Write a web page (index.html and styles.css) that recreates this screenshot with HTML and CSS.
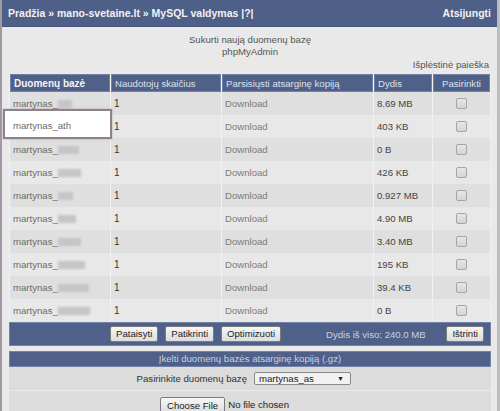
FILE: index.html
```html
<!DOCTYPE html>
<html lang="lt">
<head>
<meta charset="utf-8">
<title>MySQL valdymas</title>
<link rel="stylesheet" href="styles.css">
</head>
<body>
<div class="frame">
  <div class="topbar">
    <div class="crumbs">Pradžia » mano-svetaine.lt » MySQL valdymas |?|</div>
    <div class="logout">Atsijungti</div>
  </div>
  <div class="content">
    <div class="title">
      <div>Sukurti naują duomenų bazę</div>
      <div>phpMyAdmin</div>
    </div>
    <div class="search">Išplėstinė paieška</div>
    <table class="dbtable">
      <colgroup>
        <col class="c1"><col class="c2"><col class="c3"><col class="c4"><col class="c5">
      </colgroup>
      <thead>
        <tr>
          <th class="strong">Duomenų bazė</th>
          <th>Naudotojų skaičius</th>
          <th>Parsisiųsti atsarginę kopiją</th>
          <th>Dydis</th>
          <th class="center">Pasirinkti</th>
        </tr>
      </thead>
      <tbody>
        <tr><td class="name">martynas_<span class="blur" style="width:14px"></span></td><td class="num">1</td><td class="dl">Download</td><td class="size">8.69 MB</td><td class="center"><input type="checkbox" class="chk"></td></tr>
        <tr><td class="name hl"><span class="hlbox"></span><span class="hltext">martynas_ath</span></td><td class="num">1</td><td class="dl">Download</td><td class="size">403 KB</td><td class="center"><input type="checkbox" class="chk"></td></tr>
        <tr><td class="name">martynas_<span class="blur" style="width:21px"></span></td><td class="num">1</td><td class="dl">Download</td><td class="size">0 B</td><td class="center"><input type="checkbox" class="chk"></td></tr>
        <tr><td class="name">martynas_<span class="blur" style="width:23px"></span></td><td class="num">1</td><td class="dl">Download</td><td class="size">426 KB</td><td class="center"><input type="checkbox" class="chk"></td></tr>
        <tr><td class="name">martynas_<span class="blur" style="width:15px"></span></td><td class="num">1</td><td class="dl">Download</td><td class="size">0.927 MB</td><td class="center"><input type="checkbox" class="chk"></td></tr>
        <tr><td class="name">martynas_<span class="blur" style="width:18px"></span></td><td class="num">1</td><td class="dl">Download</td><td class="size">4.90 MB</td><td class="center"><input type="checkbox" class="chk"></td></tr>
        <tr><td class="name">martynas_<span class="blur" style="width:23px"></span></td><td class="num">1</td><td class="dl">Download</td><td class="size">3.40 MB</td><td class="center"><input type="checkbox" class="chk"></td></tr>
        <tr><td class="name">martynas_<span class="blur" style="width:27px"></span></td><td class="num">1</td><td class="dl">Download</td><td class="size">195 KB</td><td class="center"><input type="checkbox" class="chk"></td></tr>
        <tr><td class="name">martynas_<span class="blur" style="width:31px"></span></td><td class="num">1</td><td class="dl">Download</td><td class="size">39.4 KB</td><td class="center"><input type="checkbox" class="chk"></td></tr>
        <tr><td class="name">martynas_<span class="blur" style="width:32px"></span></td><td class="num">1</td><td class="dl">Download</td><td class="size">0 B</td><td class="center"><input type="checkbox" class="chk"></td></tr>
      </tbody>
    </table>
    <div class="actions">
      <div class="btngroup">
        <button class="btn">Pataisyti</button>
        <button class="btn">Patikrinti</button>
        <button class="btn">Optimizuoti</button>
      </div>
      <div class="total">Dydis iš viso: 240.0 MB</div>
      <button class="btn delete">Ištrinti</button>
    </div>
    <div class="uploadbar">Įkelti duomenų bazės atsarginę kopiją (.gz)</div>
    <div class="formrow">
      <div class="label">Pasirinkite duomenų bazę</div>
      <div class="select"><span>martynas_as</span><span class="arrow">▼</span></div>
    </div>
    <div class="formrow filerow">
      <button class="btn filebtn">Choose File</button>
      <span class="nofile">No file chosen</span>
    </div>
  </div>
</div>
</body>
</html>
```

FILE: styles.css
```css
html, body {
  margin: 0;
  padding: 0;
  background: #e9e9e9;
}
body {
  font-family: "Liberation Sans", Arial, sans-serif;
  font-size: 9.6px;
  color: #333;
}
.frame {
  position: relative;
  width: 500px;
  height: 411px;
  box-sizing: border-box;
  border-left: 2px solid #a29aa0;
  border-right: 3px solid #bdbdbd;
  overflow: hidden;
  background: #e9e9e9;
}
.topbar {
  height: 27px;
  box-sizing: border-box;
  background: #4e5f88;
  border-bottom: 1px solid #44547a;
  display: flex;
  align-items: center;
  justify-content: space-between;
  padding: 0 6px 1px 6px;
  color: #f2f2f2;
  font-weight: bold;
  font-size: 10.5px;
}
.content {
  padding: 0 6px 0 7px;
}
.title {
  text-align: center;
  color: #555;
  line-height: 12px;
  padding-top: 7px;
}
.search {
  text-align: right;
  color: #555;
  line-height: 12px;
  padding: 1px 2px 3px 0;
}
.dbtable {
  width: 482px;
  table-layout: fixed;
  border-collapse: separate;
  border-spacing: 1px 0;
  background: #f1f1f1;
}
.c1 { width: 100px; }
.c2 { width: 110px; }
.c3 { width: 151px; }
.c4 { width: 58px; }
.dbtable th {
  height: 16px;
  padding: 0 3px;
  background: #4f6089;
  border: 1px solid #7282a6;
  color: #dde2ec;
  font-weight: normal;
  text-align: left;
  white-space: nowrap;
  overflow: hidden;
}
.dbtable th.strong {
  font-weight: bold;
  color: #f4f4f4;
  font-size: 10px;
}
.dbtable .center {
  text-align: center;
}
.dbtable td {
  height: 23px;
  padding: 0 3px;
  background: #dfdfdf;
  white-space: nowrap;
}
.dbtable tbody tr:nth-child(even) td {
  background: #e8e8e8;
}
.name { color: #6b6b6b; }
.num { color: #333; font-size: 10px; }
.dl { color: #7c7c7c; }
.size { color: #444; }
.blur {
  display: inline-block;
  height: 8px;
  background: #c6c6c6;
  filter: blur(1.2px);
  vertical-align: -1px;
}
.dbtable td.hl {
  position: relative;
}
.hlbox {
  position: absolute;
  left: -7px;
  top: -6px;
  width: 109px;
  height: 30px;
  box-sizing: border-box;
  background: #fff;
  border: 2px solid #8f8189;
  box-shadow: 0 0 2px rgba(0,0,0,0.25);
  z-index: 0;
}
.hltext {
  position: relative;
  z-index: 1;
  top: -1px;
}
.chk {
  appearance: none;
  -webkit-appearance: none;
  width: 11px;
  height: 11px;
  margin: 0;
  border: 1px solid #a5a5a5;
  border-radius: 2px;
  background: linear-gradient(#e6e6e6, #d4d4d4);
  vertical-align: middle;
}
.actions {
  height: 24px;
  box-sizing: border-box;
  background: #4f6089;
  border: 1px solid #7484a7;
  display: flex;
  align-items: center;
  padding-left: 100px;
  padding-right: 6px;
}
.btngroup {
  display: flex;
  gap: 7px;
}
.btn {
  font-family: "Liberation Sans", Arial, sans-serif;
  font-size: 9.6px;
  color: #222;
  height: 16px;
  padding: 0 5px;
  border: 1px solid #7c7c7c;
  border-radius: 2px;
  background: linear-gradient(#f7f7f7, #dcdcdc);
  line-height: 14px;
}
.total {
  color: #c9d0e0;
  margin-left: 45px;
}
.delete {
  margin-left: auto;
}
.uploadbar {
  margin-top: 5px;
  height: 16px;
  box-sizing: border-box;
  background: #4f6089;
  border: 1px solid #7484a7;
  color: #c9d0e0;
  text-align: center;
  line-height: 14px;
}
.formrow {
  height: 23px;
  background: #dcdcdc;
  display: flex;
  align-items: center;
}
.label {
  width: 238px;
  text-align: right;
  color: #333;
}
.select {
  margin-left: 7px;
  width: 97px;
  height: 13px;
  box-sizing: border-box;
  border: 1px solid #8a8a8a;
  border-radius: 2px;
  background: #f1f1f1;
  display: flex;
  align-items: center;
  justify-content: space-between;
  padding: 0 6px 0 4px;
  color: #222;
}
.arrow {
  font-size: 7px;
}
.filerow {
  margin-top: 1px;
  height: 22px;
  box-sizing: border-box;
  padding-left: 151px;
  padding-top: 6px;
  align-items: flex-start;
}
.filebtn {
  height: 17px;
  padding: 0 6px;
  line-height: 15px;
}
.nofile {
  margin-left: 3px;
  line-height: 16px;
  color: #222;
}
```
